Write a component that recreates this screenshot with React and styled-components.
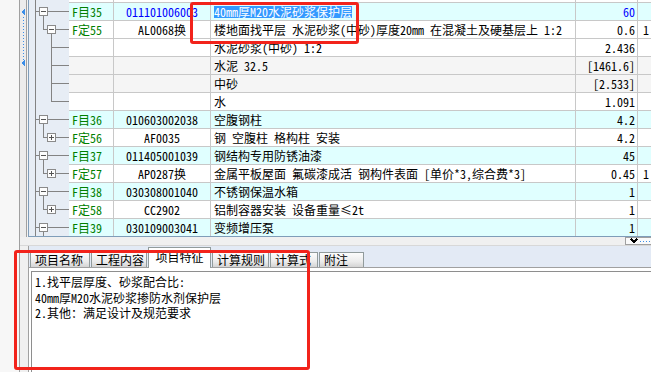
import React from 'react';
import styled, { createGlobalStyle } from 'styled-components';

const FONT = `"Noto Sans Mono CJK SC", "Noto Sans CJK SC", "Liberation Mono", monospace`;

const Global = createGlobalStyle`
  html, body { margin: 0; padding: 0; background: #fff; overflow: hidden; }
  body { font-family: ${FONT}; font-size: 12px; }
`;

const Screen = styled.div`
  position: relative;
  width: 651px;
  height: 372px;
  display: flex;
  overflow: hidden;
  font-family: ${FONT};
  font-size: 12px;
  color: #000;
`;

const Gutter = styled.div`
  flex: 0 0 19px;
  background: #f7f7f7;
  border-right: 1px solid #a0a0a0;
`;

const Workspace = styled.div`
  flex: 1;
  min-width: 0;
  display: flex;
  flex-direction: column;
  background: #f0f0f0;
`;

const GridArea = styled.div`
  flex: none;
  height: 237px;
  display: flex;
`;

const MarkerCol = styled.div`
  flex: 0 0 6px;
  background: #ececec;
  svg { display: block; }
`;

const GridFrame = styled.div`
  flex: 1;
  min-width: 0;
  display: flex;
  border-left: 1px solid #a0a0a0;
  padding-left: 1px;
  background: #f4f4f4;
`;

const Grid = styled.div`
  flex: 1;
  min-width: 0;
  display: flex;
  flex-direction: column;
  border-left: 1px solid #7f9db9;
  border-bottom: 1px solid #7f9db9;
  background: #fff;
  overflow: hidden;
`;

const Row = styled.div`
  flex: none;
  display: flex;
  height: ${p => p.$h}px;
  background: ${p => p.$bg};
`;

const TreeCell = styled.div`
  flex: 0 0 40px;
  background: #e7edf5;
  svg { display: block; }
`;

const Cell = styled.div`
  flex: ${p => (p.$w ? `0 0 ${p.$w}px` : '1 1 auto')};
  box-sizing: border-box;
  border-top: ${p => (p.$stub ? 'none' : '1px solid #c8c8c8')};
  border-left: ${p => (p.$sep ? '1px solid #c8c8c8' : 'none')};
  padding: 0 ${p => p.$pr ?? 3}px 0 ${p => p.$pl ?? 3}px;
  text-align: ${p => p.$align || 'left'};
  color: ${p => p.$color || '#000'};
  line-height: 17px;
  white-space: nowrap;
  overflow: hidden;
`;

const Selected = styled.span`
  background: #3399ff;
  color: #fff;
  line-height: 12px;
  display: inline-block;
`;

const ScrollStrip = styled.div`
  flex: none;
  height: 9px;
  display: flex;
  justify-content: flex-end;
  align-items: flex-start;
  border-bottom: 1px solid #d8d8d8;
  box-sizing: border-box;
`;

const DropBtn = styled.div`
  width: 26px;
  height: 8px;
  box-sizing: border-box;
  border: 1px solid #a0a0a0;
  border-right: none;
  background: #fafafa;
  svg { display: block; }
`;

const Bottom = styled.div`
  flex: 1;
  margin-left: 8px;
  border-left: 1px solid #a0a0a0;
  display: flex;
  flex-direction: column;
  background: #fff;
`;

const TabBar = styled.div`
  flex: none;
  height: 21px;
  background: #e3eaf5;
  border-bottom: 1px solid #a0a0a0;
  display: flex;
  align-items: flex-end;
  gap: 1px;
  padding-left: 1px;
`;

const Tab = styled.div`
  flex: 0 0 ${p => p.$w}px;
  box-sizing: border-box;
  height: ${p => (p.$active ? 21 : 15)}px;
  margin-bottom: ${p => (p.$active ? -1 : 0)}px;
  border: 1px solid #919b9c;
  border-bottom: none;
  background: ${p => (p.$active ? '#fff' : 'linear-gradient(#fcfcfc, #ececec 60%, #d4d4d4)')};
  padding-left: ${p => (p.$active ? 0 : 4)}px;
  text-align: ${p => (p.$active ? 'center' : 'left')};
  line-height: ${p => (p.$active ? 18 : 14)}px;
  white-space: nowrap;
  overflow: hidden;
`;

const ContentArea = styled.div`
  flex: 1;
  padding: 3px 0 0 2px;
  background: #fff;
`;

const TextBox = styled.div`
  height: 100%;
  box-sizing: border-box;
  border-top: 1px solid #8e8e8e;
  border-left: 1px solid #8e8e8e;
  padding: 2px 3px;
  line-height: 15.5px;
  white-space: nowrap;
`;

const Annot = styled.div`
  position: absolute;
  left: ${p => p.$x}px;
  top: ${p => p.$y}px;
  width: ${p => p.$w}px;
  height: ${p => p.$h}px;
  box-sizing: border-box;
  border: 3px solid #f2231b;
  border-radius: 3px;
  pointer-events: none;
`;

const LINE = '#838383';

function Tree({ kind, h = 18 }) {
  const V = (x, y1, y2, k) => (
    <line key={k} x1={x + 0.5} x2={x + 0.5} y1={y1} y2={y2} stroke={LINE} />
  );
  const H = (x1, x2, k) => <line key={k} x1={x1} x2={x2} y1={9.5} y2={9.5} stroke={LINE} />;
  const Box = (bx, plus, k) => (
    <g key={k}>
      <rect x={bx + 0.5} y={5.5} width={8} height={8} fill="#fdfdfd" stroke="#8a8a8a" />
      <line x1={bx + 2} x2={bx + 7} y1={9.5} y2={9.5} stroke="#555" />
      {plus && <line x1={bx + 4.5} x2={bx + 4.5} y1={7} y2={12} stroke="#555" />}
    </g>
  );
  let parts = [V(6, 0, h, 'root')];
  if (kind === 'item') {
    parts.push(H(6, 10, 'a'), Box(10, false, 'b'), H(19, 40, 'c'), V(14, 14, 18, 'd'));
  } else if (kind === 'quotaOpen') {
    parts.push(V(14, 0, 10, 'a'), H(14, 18, 'b'), Box(18, false, 'c'), H(27, 40, 'd'), V(22, 14, 18, 'e'));
  } else if (kind === 'quotaClosed') {
    parts.push(V(14, 0, 10, 'a'), H(14, 18, 'b'), Box(18, true, 'c'), H(27, 40, 'd'));
  } else if (kind === 'child') {
    parts.push(V(22, 0, 18, 'a'), H(22, 40, 'b'));
  } else if (kind === 'childLast') {
    parts.push(V(22, 0, 10, 'a'), H(22, 40, 'b'));
  }
  return (
    <svg width="40" height={h} shapeRendering="crispEdges">
      {parts}
    </svg>
  );
}

const CYAN = '#e0ffff';
const WHITE = '#ffffff';
const GRAY = '#f5f5f5';

const rows = [
  { kind: 'item', bg: CYAN, f: 'F目35', code: '011101006003', name: '40mm厚M20水泥砂浆保护层', qty: '60', sel: true, blue: true },
  { kind: 'quotaOpen', bg: WHITE, f: 'F定55', code: 'AL0068换', name: '楼地面找平层 水泥砂浆(中砂)厚度20mm 在混凝土及硬基层上 1:2', qty: '0.6', extra: '1' },
  { kind: 'child', bg: WHITE, name: '水泥砂浆(中砂) 1:2', qty: '2.436' },
  { kind: 'child', bg: GRAY, name: '水泥 32.5', qty: '[1461.6]' },
  { kind: 'child', bg: GRAY, name: '中砂', qty: '[2.533]' },
  { kind: 'childLast', bg: WHITE, name: '水', qty: '1.091' },
  { kind: 'item', bg: CYAN, f: 'F目36', code: '010603002038', name: '空腹钢柱', qty: '4.2' },
  { kind: 'quotaClosed', bg: WHITE, f: 'F定56', code: 'AF0035', name: '钢 空腹柱 格构柱 安装', qty: '4.2' },
  { kind: 'item', bg: CYAN, f: 'F目37', code: '011405001039', name: '钢结构专用防锈油漆', qty: '45' },
  { kind: 'quotaClosed', bg: WHITE, f: 'F定57', code: 'AP0287换', name: '金属平板屋面 氟碳漆成活 钢构件表面 [单价*3,综合费*3]', qty: '0.45', extra: '1' },
  { kind: 'item', bg: CYAN, f: 'F目38', code: '030308001040', name: '不锈钢保温水箱', qty: '1' },
  { kind: 'quotaClosed', bg: WHITE, f: 'F定58', code: 'CC2902', name: '铝制容器安装 设备重量≤2t', qty: '1' },
  { kind: 'item', bg: CYAN, f: 'F目39', code: '030109003041', name: '变频增压泵', qty: '1' },
];

const tabs = [
  { label: '项目名称', w: 60 },
  { label: '工程内容', w: 56 },
  { label: '项目特征', w: 63, active: true },
  { label: '计算规则', w: 57 },
  { label: '计算式', w: 48 },
  { label: '附注', w: 45 },
];

function GridRow({ r, stub }) {
  const h = stub ? 2 : 18;
  return (
    <Row $h={h} $bg={stub ? WHITE : r.bg}>
      <TreeCell>
        <Tree kind={stub ? 'stub' : r.kind} h={h} />
      </TreeCell>
      <Cell $w={44} $stub={stub} $color="#008000">{r.f}</Cell>
      <Cell $w={97} $stub={stub} $sep $align="center" $color={r.blue ? '#0000ff' : '#000'}>{r.code}</Cell>
      <Cell $w={365} $stub={stub} $sep>
        {r.sel ? <Selected>{r.name}</Selected> : r.name}
      </Cell>
      <Cell $w={62} $stub={stub} $sep $align="right" $pr={2} $color={r.blue ? '#0000ff' : '#000'}>{r.qty}</Cell>
      <Cell $stub={stub} $sep $pl={5}>{r.extra}</Cell>
    </Row>
  );
}

export default function App() {
  return (
    <>
      <Global />
      <Screen>
        <Gutter />
        <Workspace>
          <GridArea>
            <MarkerCol>
              <svg width="6" height="236" shapeRendering="crispEdges">
                <polygon points="1.5,12 5,8.5 5,15.5" fill="#3b8ee8" />
                <line x1="3.5" x2="3.5" y1="17" y2="60" stroke="#3b8ee8" strokeDasharray="1 2" />
                <polygon points="1.5,63 5,59.5 5,66.5" fill="#3b8ee8" />
              </svg>
            </MarkerCol>
            <GridFrame>
              <Grid>
                <GridRow r={{}} stub />
                {rows.map((r, i) => (
                  <GridRow key={i} r={r} />
                ))}
              </Grid>
            </GridFrame>
          </GridArea>
          <ScrollStrip>
            <DropBtn>
              <svg width="25" height="6" shapeRendering="crispEdges">
                <polyline points="5,1 8,4 11,1" fill="none" stroke="#000" strokeWidth="1.6" />
                <line x1="14" x2="25" y1="3.5" y2="3.5" stroke="#3b8ee8" strokeDasharray="1 2" />
              </svg>
            </DropBtn>
          </ScrollStrip>
          <Bottom>
            <TabBar>
              {tabs.map(t => (
                <Tab key={t.label} $w={t.w} $active={t.active}>{t.label}</Tab>
              ))}
            </TabBar>
            <ContentArea>
              <TextBox>
                <div>1.找平层厚度、砂浆配合比:</div>
                <div>40mm厚M20水泥砂浆掺防水剂保护层</div>
                <div>2.其他：满足设计及规范要求</div>
              </TextBox>
            </ContentArea>
          </Bottom>
        </Workspace>
        <Annot $x={190} $y={2} $w={169} $h={42} />
        <Annot $x={14} $y={250} $w={296} $h={120} />
      </Screen>
    </>
  );
}
